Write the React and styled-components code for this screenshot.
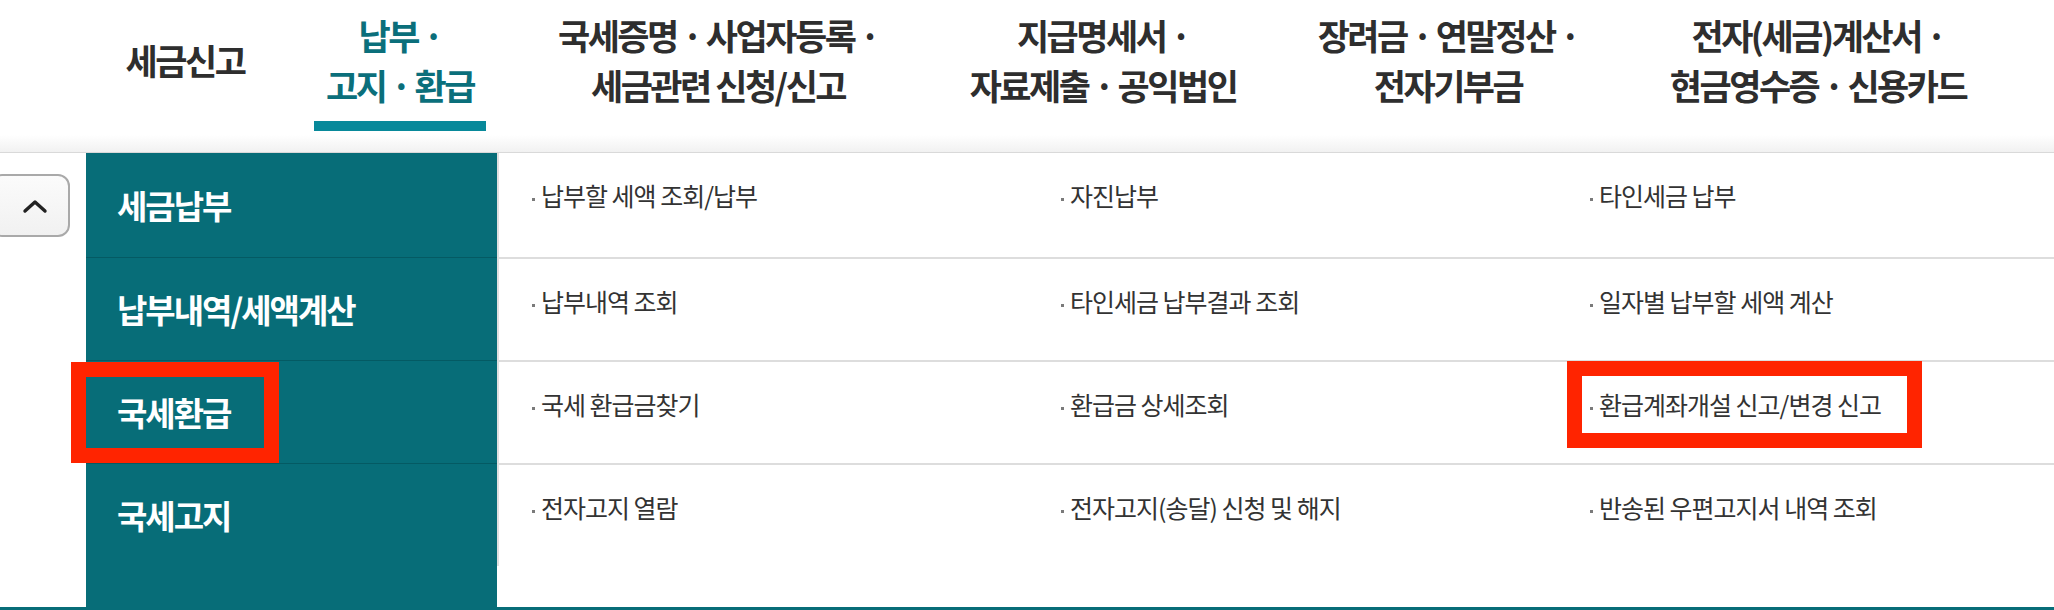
import React from "react";
import styled, { createGlobalStyle } from "styled-components";

const TEAL = "#076d78";

const GlobalStyle = createGlobalStyle`
    body {
        margin: 0;
        overflow: hidden;
        background: #ffffff;
        font-family: "Noto Sans CJK KR", "Noto Sans", sans-serif;
    }
`;

const navItems = [
    { w: 200, lines: ["세금신고"] },
    { w: 230, lines: ["납부 ·", "고지 · 환급"], active: true },
    { w: 406, lines: ["국세증명 · 사업자등록 ·", "세금관련 신청/신고"] },
    { w: 364, lines: ["지급명세서 ·", "자료제출 · 공익법인"] },
    { w: 326, lines: ["장려금 · 연말정산 ·", "전자기부금"] },
    { w: 414, lines: ["전자(세금)계산서 ·", "현금영수증 · 신용카드"] },
    { w: 348, lines: ["· 상담 · 불복 · 고충 ·", "제보 · 기타"] },
];

const menu = [
    { title: "세금납부", links: ["납부할 세액 조회/납부", "자진납부", "타인세금 납부"] },
    { title: "납부내역/세액계산", links: ["납부내역 조회", "타인세금 납부결과 조회", "일자별 납부할 세액 계산"] },
    { title: "국세환급", links: ["국세 환급금찾기", "환급금 상세조회", "환급계좌개설 신고/변경 신고"], marked: true, markedLink: 2 },
    { title: "국세고지", links: ["전자고지 열람", "전자고지(송달) 신청 및 해지", "반송된 우편고지서 내역 조회"] },
];

export default function App() {
    return (
        <Page>
            <GlobalStyle />
            <Nav>
                {navItems.map((item, i) => (
                    <NavItem key={i} $w={item.w} $active={item.active}>
                        <NavLabel $active={item.active}>
                            {item.lines.map((l, j) => (
                                <React.Fragment key={j}>
                                    {j > 0 && <br />}
                                    {l}
                                </React.Fragment>
                            ))}
                        </NavLabel>
                    </NavItem>
                ))}
            </Nav>
            <Shade />
            <Body>
                <Gutter>
                    <UpButton aria-label="닫기">
                        <svg width="26" height="16" viewBox="0 0 26 16">
                            <polyline points="3,13 13,4 23,13" fill="none" stroke="#222" strokeWidth="3.4" strokeLinecap="round" strokeLinejoin="round" />
                        </svg>
                    </UpButton>
                </Gutter>
                <Sidebar>
                    {menu.map((m, i) => (
                        <SideRow key={m.title} $first={i === 0} $marked={m.marked}>
                            {m.title}
                        </SideRow>
                    ))}
                </Sidebar>
                <Content>
                    {menu.map((m, i) => (
                        <ContentRow key={m.title} $first={i === 0}>
                            {m.links.map((link, j) => (
                                <div key={link}>
                                    <LinkItem $marked={m.marked && m.markedLink === j}>{link}</LinkItem>
                                </div>
                            ))}
                        </ContentRow>
                    ))}
                </Content>
            </Body>
            <FooterLine />
        </Page>
    );
}

const Page = styled.div`
    width: 2054px;
    height: 610px;
    overflow: hidden;
`;

const Nav = styled.nav`
    display: flex;
    height: 135px;
    padding-left: 85px;
    white-space: nowrap;
`;

const NavItem = styled.a`
    position: relative;
    flex: 0 0 ${({ $w }) => $w}px;
    height: 135px;
    padding-top: 10px;
    box-sizing: border-box;
    display: flex;
    justify-content: center;
    cursor: pointer;

    &::after {
        content: "";
        display: ${({ $active }) => ($active ? "block" : "none")};
        position: absolute;
        top: 121px;
        left: 50%;
        width: 172px;
        height: 10px;
        transform: translateX(-50%);
        background: #08899a;
    }
`;

const NavLabel = styled.span`
    height: 100px;
    display: flex;
    align-items: center;
    text-align: center;
    font-size: 35px;
    font-weight: 700;
    line-height: 50px;
    letter-spacing: -2.5px;
    color: ${({ $active }) => ($active ? "#0b6f7b" : "#2e2e2e")};
`;

const Shade = styled.div`
    height: 17px;
    background: linear-gradient(#ffffff, #f1f1f1);
    border-bottom: 1px solid #d9d9d9;
`;

const Body = styled.div`
    display: flex;
    height: 454px;
`;

const Gutter = styled.div`
    width: 86px;
    flex: 0 0 86px;
    padding-top: 21px;
    box-sizing: border-box;
`;

const UpButton = styled.button`
    width: 80px;
    height: 63px;
    margin-left: -10px;
    padding: 0 0 0 10px;
    display: flex;
    align-items: center;
    justify-content: center;
    background: linear-gradient(#fbfbfb, #f1f1f1);
    border: 2px solid #a9a9a9;
    border-radius: 12px;
    box-sizing: border-box;
`;

const Sidebar = styled.div`
    width: 411px;
    flex: 0 0 411px;
    background: ${TEAL};
`;

const SideRow = styled.div`
    position: relative;
    height: ${({ $first }) => ($first ? 104 : 103)}px;
    box-sizing: border-box;
    border-top: ${({ $first }) => ($first ? "none" : "1px solid #045a63")};
    display: flex;
    align-items: center;
    padding-left: 31px;
    font-size: 33px;
    font-weight: 700;
    letter-spacing: -2px;
    color: #ffffff;

    &::after {
        content: "";
        display: ${({ $marked }) => ($marked ? "block" : "none")};
        position: absolute;
        left: -15px;
        top: 1px;
        width: 208px;
        height: 101px;
        border: 15px solid #ff2400;
        box-sizing: border-box;
    }
`;

const Content = styled.div`
    flex: 1;
    align-self: flex-start;
    border-left: 2px solid #e0e0e0;
`;

const ContentRow = styled.div`
    display: grid;
    grid-template-columns: 529px 529px 1fr;
    height: ${({ $first }) => ($first ? 104 : 103)}px;
    box-sizing: border-box;
    padding: 25px 0 0 33px;
    border-top: ${({ $first }) => ($first ? "none" : "2px solid #dddddd")};
`;

const LinkItem = styled.a`
    position: relative;
    display: inline-block;
    font-size: 25px;
    line-height: 34px;
    letter-spacing: -1px;
    color: #333333;
    white-space: nowrap;
    cursor: pointer;

    &::before {
        content: "";
        display: inline-block;
        width: 3px;
        height: 3px;
        margin-right: 6px;
        vertical-align: middle;
        background: #7a7a7a;
    }

    &::after {
        content: "";
        display: ${({ $marked }) => ($marked ? "block" : "none")};
        position: absolute;
        left: -23px;
        top: -26px;
        width: 355px;
        height: 87px;
        border: 15px solid #ff2400;
        box-sizing: border-box;
    }
`;

const FooterLine = styled.div`
    height: 3px;
    background: ${TEAL};
`;
